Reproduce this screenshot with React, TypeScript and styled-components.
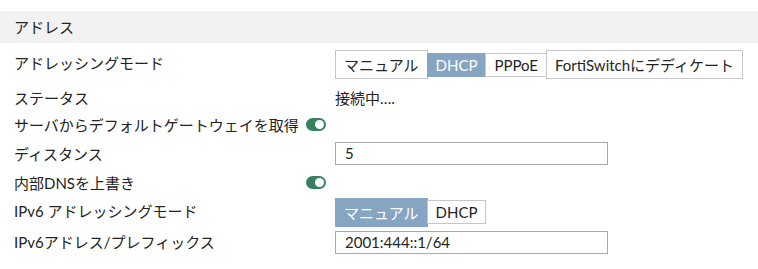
import React from "react";
import styled, { createGlobalStyle } from "styled-components";

const GlobalStyle = createGlobalStyle`
  html, body {
    margin: 0;
    padding: 0;
    background: #ffffff;
  }
  body {
    font-family: "Lato", "Noto Sans CJK JP", sans-serif;
    font-size: 15px;
    color: #232323;
  }
`;

const Page = styled.div`
  width: 758px;
  padding-top: 11px;
`;

const SectionHeader = styled.div`
  height: 32px;
  background: #f2f2f2;
  display: flex;
  align-items: center;
  padding-left: 14px;
  padding-bottom: 1px;
  box-sizing: border-box;
`;

const Row = styled.div<{ $h: number }>`
  display: grid;
  grid-template-columns: 292px 29px 1fr;
  align-items: center;
  height: ${(p) => p.$h}px;
  padding-left: 14px;
`;

const Label = styled.div<{ $shift?: number }>`
  white-space: nowrap;
  transform: translateY(${(p) => p.$shift ?? 0}px);
`;

const Value = styled.div<{ $shift?: number }>`
  grid-column: 3;
  display: flex;
  align-items: center;
  transform: translateY(${(p) => p.$shift ?? 0}px);
`;

const ButtonGroup = styled.div`
  display: flex;
  align-items: center;
`;

const SegButton = styled.div<{ $active?: boolean; $tall?: boolean }>`
  height: ${(p) => (p.$tall ? 29 : 24)}px;
  box-sizing: border-box;
  display: flex;
  align-items: center;
  padding: 0 8px;
  border: 1px solid ${(p) => (p.$active ? "#86a5c2" : "#c6c6c6")};
  background: ${(p) => (p.$active ? "#86a5c2" : "#ffffff")};
  color: ${(p) => (p.$active ? "#ffffff" : "#232323")};
  white-space: nowrap;
  & + & {
    margin-left: -1px;
  }
`;

const TextInput = styled.input`
  width: 273px;
  height: 23px;
  box-sizing: border-box;
  border: 1px solid #a9a9a9;
  padding: 0 9px;
  font: inherit;
  color: #232323;
  outline: none;
`;

const Toggle = styled.div`
  grid-column: 2;
  width: 20px;
  height: 13px;
  border-radius: 7px;
  background: #358160;
  position: relative;
  &::after {
    content: "";
    position: absolute;
    right: 2px;
    top: 2px;
    width: 9px;
    height: 9px;
    border-radius: 50%;
    background: #ffffff;
  }
`;

export default function App() {
  return (
    <>
      <GlobalStyle />
      <Page>
        <SectionHeader>アドレス</SectionHeader>
        <Row $h={41}>
          <Label $shift={-1}>アドレッシングモード</Label>
          <Value $shift={1}>
            <ButtonGroup>
              <SegButton $tall>マニュアル</SegButton>
              <SegButton $active>DHCP</SegButton>
              <SegButton>PPPoE</SegButton>
              <SegButton $tall>FortiSwitchにデディケート</SegButton>
            </ButtonGroup>
          </Value>
        </Row>
        <Row $h={26}>
          <Label>ステータス</Label>
          <Value>接続中….</Value>
        </Row>
        <Row $h={28}>
          <Label>サーバからデフォルトゲートウェイを取得</Label>
          <Toggle />
        </Row>
        <Row $h={30}>
          <Label>ディスタンス</Label>
          <Value>
            <TextInput defaultValue="5" />
          </Value>
        </Row>
        <Row $h={28}>
          <Label>内部DNSを上書き</Label>
          <Toggle />
        </Row>
        <Row $h={30}>
          <Label $shift={-1}>IPv6 アドレッシングモード</Label>
          <Value $shift={1}>
            <ButtonGroup>
              <SegButton $active $tall>マニュアル</SegButton>
              <SegButton>DHCP</SegButton>
            </ButtonGroup>
          </Value>
        </Row>
        <Row $h={30}>
          <Label>IPv6アドレス/プレフィックス</Label>
          <Value $shift={1}>
            <TextInput defaultValue="2001:444::1/64" />
          </Value>
        </Row>
      </Page>
    </>
  );
}
